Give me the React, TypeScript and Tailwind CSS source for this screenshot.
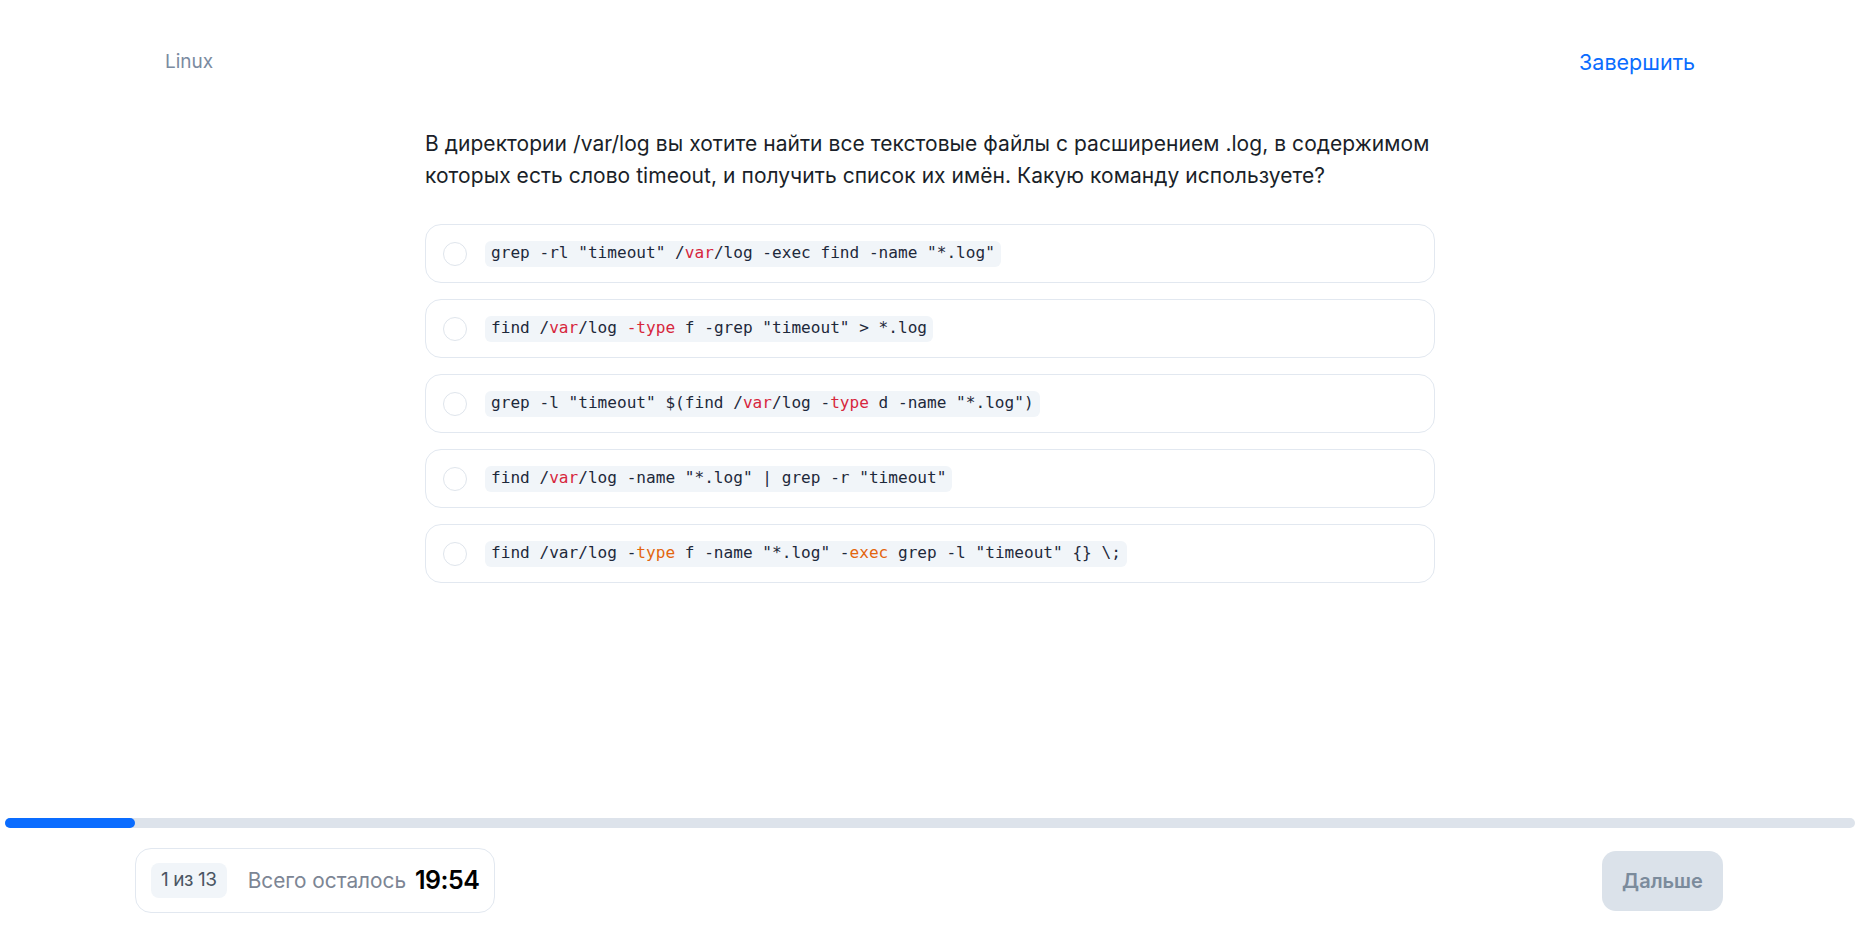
import React from "react";

type Seg = { t: string; c?: "red" | "orange" };

const options: Seg[][] = [
  [{ t: 'grep -rl "timeout" /' }, { t: "var", c: "red" }, { t: '/log -exec find -name "*.log"' }],
  [
    { t: "find /" },
    { t: "var", c: "red" },
    { t: "/log " },
    { t: "-type", c: "red" },
    { t: ' f -grep "timeout" > *.log' },
  ],
  [
    { t: 'grep -l "timeout" $(find /' },
    { t: "var", c: "red" },
    { t: "/log -" },
    { t: "type", c: "red" },
    { t: ' d -name "*.log")' },
  ],
  [{ t: "find /" }, { t: "var", c: "red" }, { t: '/log -name "*.log" | grep -r "timeout"' }],
  [
    { t: "find /var/log -" },
    { t: "type", c: "orange" },
    { t: ' f -name "*.log" -' },
    { t: "exec", c: "orange" },
    { t: ' grep -l "timeout" {} \\;' },
  ],
];

export default function App() {
  return (
    <div
      className="h-[935px] w-full flex flex-col bg-white overflow-hidden"
      style={{ fontFamily: "Inter, 'Noto Sans', sans-serif" }}
    >
      <div className="w-[1590px] mx-auto flex justify-between items-center px-[30px] pt-[48px]">
        <span className="text-[19px] leading-[28px] text-[#7b8ba1]">Linux</span>
        <button className="text-[21.5px] leading-[28px] text-[#0a6cff]">Завершить</button>
      </div>

      <div className="w-[1010px] mx-auto mt-[52px]">
        <p className="text-[21px] leading-[32px] text-[#1a1f29] tracking-[0.05px]">
          В директории /var/log вы хотите найти все текстовые файлы с расширением .log, в содержимом
          которых есть слово timeout, и получить список их имён. Какую команду используете?
        </p>
        <div className="mt-8 flex flex-col gap-4">
          {options.map((segs, i) => (
            <div
              key={i}
              className="h-[59px] border border-[#e2e8f0] rounded-2xl flex items-center pl-[17px] gap-[18px] bg-white"
            >
              <span className="w-6 h-6 rounded-full border-[1.5px] border-[#dfe5ec] shrink-0" />
              <code
                className="bg-[#f1f5f9] rounded-md px-1.5 h-[26px] flex items-center text-[16.1px] text-[#1e293b] whitespace-pre"
                style={{ fontFamily: "'DejaVu Sans Mono', 'Liberation Mono', monospace" }}
              >
                {segs.map((s, j) => (
                  <span
                    key={j}
                    className={
                      s.c === "red" ? "text-[#d7263d]" : s.c === "orange" ? "text-[#e3650e]" : ""
                    }
                  >
                    {s.t}
                  </span>
                ))}
              </code>
            </div>
          ))}
        </div>
      </div>

      <div className="mt-auto">
        <div className="px-[5px]">
          <div className="h-[10px] rounded-full bg-[#dde3eb]">
            <div className="h-[10px] w-[130px] rounded-full bg-[#0a6cff]" />
          </div>
        </div>
        <div className="w-[1590px] mx-auto mt-5 pb-[22px] flex justify-between items-center">
          <div className="h-[65px] border border-[#e2e8f0] rounded-2xl flex items-center pl-[15px] pr-[15px]">
            <span className="h-[35px] px-[10px] rounded-lg bg-[#f1f5f9] flex items-center text-[19px] text-[#4b5563] tracking-[-0.4px]">
              1 из 13
            </span>
            <span className="ml-[21px] text-[20.8px] text-[#7c8594]">Всего осталось</span>
            <span className="ml-[9px] text-[25px] font-semibold text-black tracking-[-0.5px]">19:54</span>
          </div>
          <button className="w-[121px] h-[60px] mr-[2px] rounded-[14px] bg-[#dbe2ea] text-[20px] font-semibold text-[#7b8b9c]">
            Дальше
          </button>
        </div>
      </div>
    </div>
  );
}
